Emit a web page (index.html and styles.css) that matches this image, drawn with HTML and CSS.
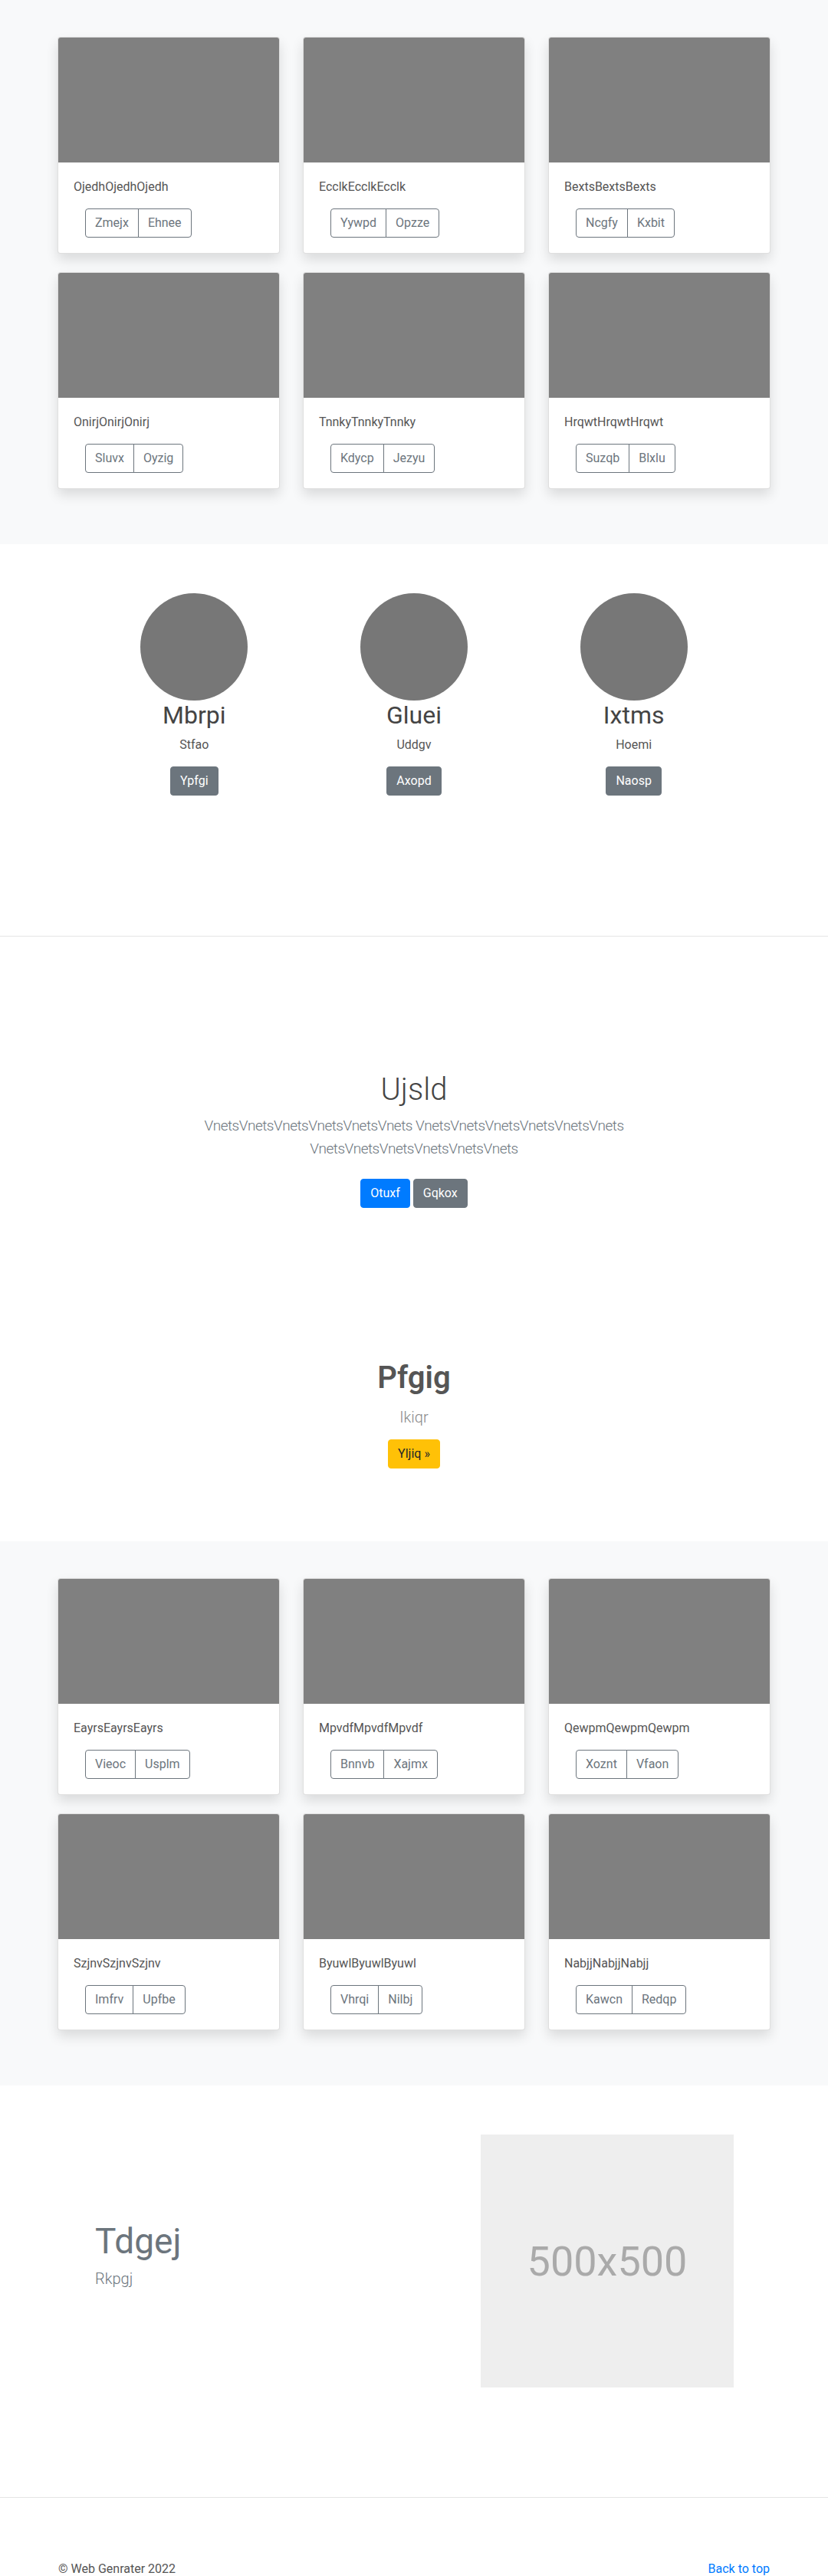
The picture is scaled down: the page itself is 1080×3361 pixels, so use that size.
FILE: index.html
```html
<!DOCTYPE html>
<html lang="en">
<head>
<meta charset="utf-8">
<title>Web Genrater</title>
<link rel="stylesheet" href="styles.css">
</head>
<body>
<main>
  <section class="album">
    <div class="card-grid">
      <div class="card"><div class="card-img"></div><div class="card-body"><p class="card-text">OjedhOjedhOjedh</p><div class="btn-group"><a class="btn-outline">Zmejx</a><a class="btn-outline">Ehnee</a></div></div></div>
      <div class="card"><div class="card-img"></div><div class="card-body"><p class="card-text">EcclkEcclkEcclk</p><div class="btn-group"><a class="btn-outline">Yywpd</a><a class="btn-outline">Opzze</a></div></div></div>
      <div class="card"><div class="card-img"></div><div class="card-body"><p class="card-text">BextsBextsBexts</p><div class="btn-group"><a class="btn-outline">Ncgfy</a><a class="btn-outline">Kxbit</a></div></div></div>
      <div class="card"><div class="card-img"></div><div class="card-body"><p class="card-text">OnirjOnirjOnirj</p><div class="btn-group"><a class="btn-outline">Sluvx</a><a class="btn-outline">Oyzig</a></div></div></div>
      <div class="card"><div class="card-img"></div><div class="card-body"><p class="card-text">TnnkyTnnkyTnnky</p><div class="btn-group"><a class="btn-outline">Kdycp</a><a class="btn-outline">Jezyu</a></div></div></div>
      <div class="card"><div class="card-img"></div><div class="card-body"><p class="card-text">HrqwtHrqwtHrqwt</p><div class="btn-group"><a class="btn-outline">Suzqb</a><a class="btn-outline">Blxlu</a></div></div></div>
    </div>
  </section>

  <section class="team">
    <div class="team-grid">
      <div class="member"><div class="avatar"></div><h2 class="member-name">Mbrpi</h2><p class="member-role">Stfao</p><a class="btn btn-secondary">Ypfgi</a></div>
      <div class="member"><div class="avatar"></div><h2 class="member-name">Gluei</h2><p class="member-role">Uddgv</p><a class="btn btn-secondary">Axopd</a></div>
      <div class="member"><div class="avatar"></div><h2 class="member-name">Ixtms</h2><p class="member-role">Hoemi</p><a class="btn btn-secondary">Naosp</a></div>
    </div>
  </section>

  <section class="heroes">
    <div class="hero">
      <h1 class="hero-title">Ujsld</h1>
      <p class="lead">VnetsVnetsVnetsVnetsVnetsVnets VnetsVnetsVnetsVnetsVnetsVnets VnetsVnetsVnetsVnetsVnetsVnets</p>
      <p class="hero-actions"><a class="btn btn-primary">Otuxf</a> <a class="btn btn-secondary">Gqkox</a></p>
    </div>
    <div class="callout">
      <h1 class="callout-title">Pfgig</h1>
      <p class="callout-sub">Ikiqr</p>
      <a class="btn btn-warning">Yljiq »</a>
    </div>
  </section>

  <section class="album">
    <div class="card-grid">
      <div class="card"><div class="card-img"></div><div class="card-body"><p class="card-text">EayrsEayrsEayrs</p><div class="btn-group"><a class="btn-outline">Vieoc</a><a class="btn-outline">Usplm</a></div></div></div>
      <div class="card"><div class="card-img"></div><div class="card-body"><p class="card-text">MpvdfMpvdfMpvdf</p><div class="btn-group"><a class="btn-outline">Bnnvb</a><a class="btn-outline">Xajmx</a></div></div></div>
      <div class="card"><div class="card-img"></div><div class="card-body"><p class="card-text">QewpmQewpmQewpm</p><div class="btn-group"><a class="btn-outline">Xoznt</a><a class="btn-outline">Vfaon</a></div></div></div>
      <div class="card"><div class="card-img"></div><div class="card-body"><p class="card-text">SzjnvSzjnvSzjnv</p><div class="btn-group"><a class="btn-outline">Imfrv</a><a class="btn-outline">Upfbe</a></div></div></div>
      <div class="card"><div class="card-img"></div><div class="card-body"><p class="card-text">ByuwlByuwlByuwl</p><div class="btn-group"><a class="btn-outline">Vhrqi</a><a class="btn-outline">Nilbj</a></div></div></div>
      <div class="card"><div class="card-img"></div><div class="card-body"><p class="card-text">NabjjNabjjNabjj</p><div class="btn-group"><a class="btn-outline">Kawcn</a><a class="btn-outline">Redqp</a></div></div></div>
    </div>
  </section>

  <section class="feature">
    <div class="feature-text">
      <h1 class="feature-title">Tdgej</h1>
      <p class="feature-sub">Rkpgj</p>
    </div>
    <div class="placeholder">500x500</div>
  </section>
</main>
<footer class="footer">
  <p class="footer-copy">© Web Genrater 2022</p>
  <a class="footer-link" href="#">Back to top</a>
</footer>
</body>
</html>
```
FILE: styles.css
```css
* { box-sizing: border-box; }
html, body { margin: 0; padding: 0; }
body {
  font-family: "Segoe UI", Roboto, "Noto Sans", "Liberation Sans", sans-serif;
  font-size: 16px;
  line-height: 1.5;
  color: #212529;
  background: #fff;
}
p { margin: 0; }
h1, h2 { margin: 0; }
a { text-decoration: none; }

/* album */
.album {
  background: #f8f9fa;
  padding: 48px 0 72px;
}
.card-grid {
  width: 930px;
  margin: 0 auto;
  display: grid;
  grid-template-columns: repeat(3, 290px);
  column-gap: 30px;
  row-gap: 24px;
}
.card {
  background: #fff;
  border: 1px solid rgba(0,0,0,.125);
  border-radius: 4px;
  box-shadow: 0 8px 16px rgba(0,0,0,.12);
  overflow: hidden;
}
.card-img {
  height: 163px;
  background: #808080;
}
.card-body { padding: 20px; }
.card-text {
  color: #555;
  margin-bottom: 16px;
}
.btn-group {
  display: inline-flex;
  margin-left: 15px;
}
.btn-outline {
  display: inline-block;
  padding: 6px 12px;
  line-height: 24px;
  font-size: 16px;
  color: #6c757d;
  border: 1px solid #6c757d;
  background: transparent;
}
.btn-outline:first-child { border-radius: 4px 0 0 4px; }
.btn-outline:last-child { border-radius: 0 4px 4px 0; margin-left: -1px; }

.btn {
  display: inline-block;
  padding: 6px 12px;
  line-height: 24px;
  font-size: 16px;
  border: 1px solid transparent;
  border-radius: 4px;
  color: #fff;
}
.btn-secondary { background: #6c757d; border-color: #6c757d; }
.btn-primary { background: #007bff; border-color: #007bff; }
.btn-warning { background: #ffc107; border-color: #ffc107; color: #212529; }

/* team */
.team {
  padding: 64px 0 183px;
  border-bottom: 1px solid #e5e5e5;
}
.team-grid {
  width: 860px;
  margin: 0 auto;
  display: grid;
  grid-template-columns: repeat(3, 1fr);
}
.member {
  display: flex;
  flex-direction: column;
  align-items: center;
}
.avatar {
  width: 140px;
  height: 140px;
  border-radius: 50%;
  background: #777;
}
.member-name {
  font-size: 32px;
  font-weight: 400;
  line-height: 1.2;
  color: #444;
  margin-bottom: 8px;
}
.member-role {
  color: #555;
  margin-bottom: 16px;
}

/* heroes */
.heroes {
  padding: 176px 0 95px;
  text-align: center;
}
.hero {
  width: 610px;
  margin: 0 auto;
}
.hero-title {
  font-size: 40px;
  font-weight: 300;
  line-height: 1.2;
  color: #444;
  margin-bottom: 8px;
}
.lead {
  font-size: 19px;
  font-weight: 300;
  line-height: 30px;
  letter-spacing: -0.5px;
  color: #6c757d;
  margin-bottom: 16px;
}
.hero-actions .btn { margin: 8px 0; }
.callout { padding-top: 190px; }
.callout-title {
  font-size: 40px;
  font-weight: 600;
  line-height: 1.2;
  color: #555;
  margin-bottom: 12px;
}
.callout-sub {
  font-size: 20px;
  font-weight: 300;
  line-height: 30px;
  color: #888;
  margin-bottom: 14px;
}

/* feature */
.feature {
  display: flex;
  align-items: center;
  padding: 64px 0 143px 124px;
  border-bottom: 1px solid #e5e5e5;
}
.feature-text { width: 503px; }
.feature-title {
  font-size: 46px;
  font-weight: 400;
  line-height: 1.2;
  color: #6c757d;
  margin-bottom: 6px;
}
.feature-sub {
  font-size: 20px;
  font-weight: 300;
  line-height: 30px;
  color: #6c757d;
  margin-bottom: 16px;
}
.placeholder {
  width: 330px;
  height: 330px;
  background: #eeeeee;
  color: #aaaaaa;
  font-size: 54px;
  display: flex;
  align-items: center;
  justify-content: center;
}

/* footer */
.footer {
  display: flex;
  justify-content: space-between;
  padding: 81px 76px 0;
}
.footer-copy { color: #555; }
.footer-link { color: #007bff; }
```
